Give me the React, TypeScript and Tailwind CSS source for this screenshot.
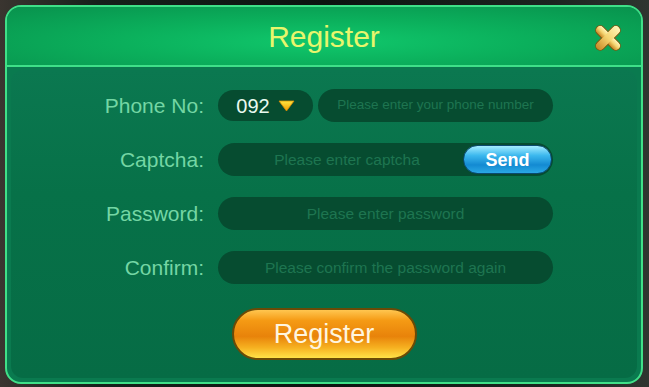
import React from 'react'

const font = { fontFamily: '"Liberation Sans", Arial, sans-serif' }

function CloseIcon() {
  return (
    <svg width="32" height="32" viewBox="0 0 32 32">
      <defs>
        <linearGradient id="xg" x1="0" y1="0" x2="0" y2="1">
          <stop offset="0" stopColor="#fff6b8" />
          <stop offset="0.5" stopColor="#f5d470" />
          <stop offset="1" stopColor="#c98a28" />
        </linearGradient>
      </defs>
      <g transform="rotate(45 16 16)" stroke="#7a5410" strokeWidth="1" fill="url(#xg)">
        <rect x="0.5" y="11.5" width="31" height="9" rx="4.5" />
        <rect x="11.5" y="0.5" width="9" height="31" rx="4.5" />
      </g>
      <g transform="rotate(45 16 16)" fill="url(#xg)">
        <rect x="1" y="12" width="30" height="8" rx="4" />
        <rect x="12" y="1" width="8" height="30" rx="4" />
      </g>
    </svg>
  )
}

function Caret() {
  return (
    <svg width="17" height="12" viewBox="0 0 17 12">
      <defs>
        <linearGradient id="cg" x1="0" y1="0" x2="0" y2="1">
          <stop offset="0" stopColor="#ffe640" />
          <stop offset="1" stopColor="#f29a00" />
        </linearGradient>
      </defs>
      <path d="M1 1 H16 L8.5 11 Z" fill="url(#cg)" stroke="#d98a00" strokeWidth="0.8" strokeLinejoin="round" />
    </svg>
  )
}

function Field({ placeholder, size = 'text-[15.5px]', width = 'w-[335px]', children }: { placeholder: string; size?: string; width?: string; children?: React.ReactNode }) {
  return (
    <div className={`${width} h-[33px] rounded-full bg-[#064c30] flex items-center relative`}>
      <span className={`flex-1 text-center ${size} text-[#1e7550] ${children ? 'pr-[77px]' : ''}`}>{placeholder}</span>
      {children}
    </div>
  )
}

function Row({ label, children }: { label: string; children: React.ReactNode }) {
  return (
    <div className="flex items-center h-[33px]">
      <div className="w-[193px] text-right text-[21px] text-[#74d6a4] leading-none">{label}</div>
      <div className="ml-[14px] flex items-center gap-[5px]">{children}</div>
    </div>
  )
}

export default function App() {
  return (
    <div className="w-[649px] h-[387px] bg-[linear-gradient(90deg,#3a3530_0%,#16201b_15%,#0c1410_50%,#1c2420_85%,#2f3530_100%)] pt-[5px] pl-[5px]" style={font}>
      <div className="w-[638px] h-[379px] rounded-[16px] border-2 border-[#3fe088] bg-[#0a7a4f] flex flex-col overflow-hidden">
        <div className="h-[60px] shrink-0 border-b-2 border-[#3fe088] bg-[radial-gradient(ellipse_at_50%_60%,#10c86c_0%,#0bb05c_45%,#08924d_100%)] relative flex items-center justify-center">
          <span className="text-[30px] text-[#e8f66c] leading-none pt-[2px]">Register</span>
          <div className="absolute right-[17px] top-[15px]">
            <CloseIcon />
          </div>
        </div>
        <div className="flex-1 px-[4px] pt-[3px] pb-[4px]">
          <div className="h-full rounded-[12px] bg-[linear-gradient(180deg,#0b7850_0%,#077148_40%,#066c45_100%)] pt-[19px] flex flex-col gap-[21px]">
            <Row label="Phone No:">
              <div className="w-[95px] h-[31px] rounded-full bg-[#064c30] flex items-center justify-center gap-[8px]">
                <span className="text-[20px] text-[#eafaf0] leading-none">092</span>
                <Caret />
              </div>
              <Field placeholder="Please enter your phone number" size="text-[13.5px]" width="w-[235px]" />
            </Row>
            <Row label="Captcha:">
              <Field placeholder="Please enter captcha">
                <div className="absolute right-[1px] top-[2px] w-[89px] h-[29px] rounded-full border border-[#0b4a70] bg-[linear-gradient(180deg,#a4ecff_0%,#3cb8ee_35%,#138ad2_70%,#2aa8e4_100%)] flex items-center justify-center">
                  <span className="text-[18px] font-bold text-white leading-none">Send</span>
                </div>
              </Field>
            </Row>
            <Row label="Password:">
              <Field placeholder="Please enter password" />
            </Row>
            <Row label="Confirm:">
              <Field placeholder="Please confirm the password again" />
            </Row>
            <div className="flex justify-center mt-[3px]">
              <div className="w-[185px] h-[52px] rounded-full border-2 border-[#6a4a06] bg-[linear-gradient(180deg,#ffc650_0%,#f59a14_22%,#e8830a_55%,#f6b020_78%,#ffe248_100%)] flex items-center justify-center">
                <span className="text-[27px] text-[#fff5df] leading-none">Register</span>
              </div>
            </div>
          </div>
        </div>
      </div>
    </div>
  )
}
